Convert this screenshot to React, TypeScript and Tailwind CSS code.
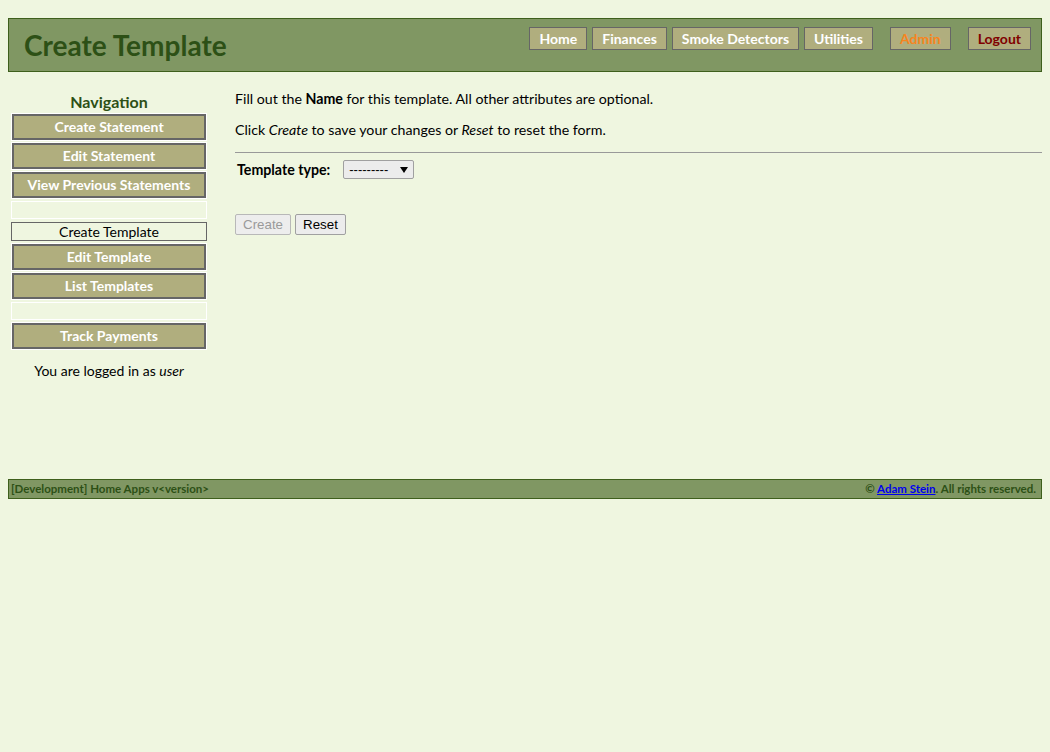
import { useState } from 'react'

const topLinks = [
  { label: 'Home', color: 'text-white' },
  { label: 'Finances', color: 'text-white' },
  { label: 'Smoke Detectors', color: 'text-white' },
  { label: 'Utilities', color: 'text-white' },
]

type NavItem = { label: string; current?: boolean } | null

const navItems: NavItem[] = [
  { label: 'Create Statement' },
  { label: 'Edit Statement' },
  { label: 'View Previous Statements' },
  null,
  { label: 'Create Template', current: true },
  { label: 'Edit Template' },
  { label: 'List Templates' },
  null,
  { label: 'Track Payments' },
]

function TopButton({ label, color }: { label: string; color: string }) {
  return (
    <a
      href="#"
      className={`block border border-[#666] bg-[#b0ae7e] px-[9px] py-[2px] text-[14px] font-bold leading-[17px] ${color}`}
    >
      {label}
    </a>
  )
}

function SideItem({ item }: { item: NavItem }) {
  if (!item) return <div className="my-[1px] h-[18px] border border-white" />
  if (item.current)
    return (
      <div className="my-[1px] border border-[#666] text-center text-[14px] leading-[17px] text-black">
        {item.label}
      </div>
    )
  return (
    <div className="border border-white">
      <a
        href="#"
        className="block border-2 border-[#666] bg-[#b0ae7e] text-center text-[14px] font-bold leading-[22px] text-white"
      >
        {item.label}
      </a>
    </div>
  )
}

export default function App() {
  const [type, setType] = useState('')

  return (
    <div className="min-h-[752px] bg-[#eff6e0] px-[8px] pt-[18px] font-['Lato','Noto_Sans',sans-serif] text-[14.2px] text-black">
      <header className="flex h-[54px] items-center justify-between border border-[#3e5f1c] bg-[#809763] pl-[15px] pr-[10px]">
        <h1 className="text-[28px] font-bold text-[#2d5016]">Create Template</h1>
        <nav className="flex items-center self-start pt-[8px]">
          <div className="flex gap-[5px]">
            {topLinks.map((l) => (
              <TopButton key={l.label} {...l} />
            ))}
          </div>
          <div className="ml-[17px]">
            <TopButton label="Admin" color="text-[#f7851f]" />
          </div>
          <div className="ml-[17px]">
            <TopButton label="Logout" color="text-[#800000]" />
          </div>
        </nav>
      </header>

      <div className="flex">
        <aside className="ml-[3px] mt-[20px] w-[196px]">
          <h2 className="text-center text-[16px] font-bold leading-[19px] text-[#2d5016]">Navigation</h2>
          <div className="mt-[2px] flex flex-col gap-[1px]">
            {navItems.map((item, i) => (
              <SideItem key={i} item={item} />
            ))}
          </div>
          <p className="mt-[10px] text-center text-[14px]">
            You are logged in as <i>user</i>
          </p>
        </aside>

        <main className="ml-[28px] flex-1 pt-[18px]">
          <p className="leading-[17px]">
            Fill out the <b>Name</b> for this template. All other attributes are optional.
          </p>
          <p className="mt-[14px] leading-[17px]">
            Click <i>Create</i> to save your changes or <i>Reset</i> to reset the form.
          </p>
          <hr className="mt-[14px] border-t border-[#999]" />
          <div className="mt-[6px] flex items-center">
            <label className="ml-[2px] font-bold">Template type:</label>
            <select
              value={type}
              onChange={(e) => setType(e.target.value)}
              className="ml-[13px] h-[19px] w-[71px] appearance-none rounded-[2px] border border-[#a0a0a0] bg-[#ececec] pl-[5px] font-['Liberation_Sans',sans-serif] text-[13px] leading-[17px]"
              style={{
                backgroundImage:
                  "url(\"data:image/svg+xml;utf8,<svg xmlns='http://www.w3.org/2000/svg' width='8' height='6'><path d='M0 0h8L4 6z' fill='black'/></svg>\")",
                backgroundRepeat: 'no-repeat',
                backgroundPosition: 'right 5px center',
              }}
            >
              <option value="">---------</option>
              <option value="m">Monthly</option>
            </select>
          </div>
          <div className="mt-[34px] flex gap-[4px] font-['Liberation_Sans',sans-serif] text-[13.33px]">
            <button
              disabled
              className="h-[21px] rounded-[2px] border border-[#b8b8b8] bg-[#ededed] px-[7px] text-[#9a9a9a]"
            >
              Create
            </button>
            <button className="h-[21px] rounded-[2px] border border-[#a0a0a0] bg-[#ececec] px-[7px] text-black">
              Reset
            </button>
          </div>
        </main>
      </div>

      <footer className="mt-[98px] flex h-[20px] items-center justify-between border border-[#3e5f1c] bg-[#809763] px-[2px] pr-[5px] text-[11.5px] font-bold text-[#2d5016]">
        <span>[Development] Home Apps v&lt;version&gt;</span>
        <span>
          © <a href="#" className="text-[#0000ee] underline">Adam Stein</a>. All rights reserved.
        </span>
      </footer>
    </div>
  )
}
